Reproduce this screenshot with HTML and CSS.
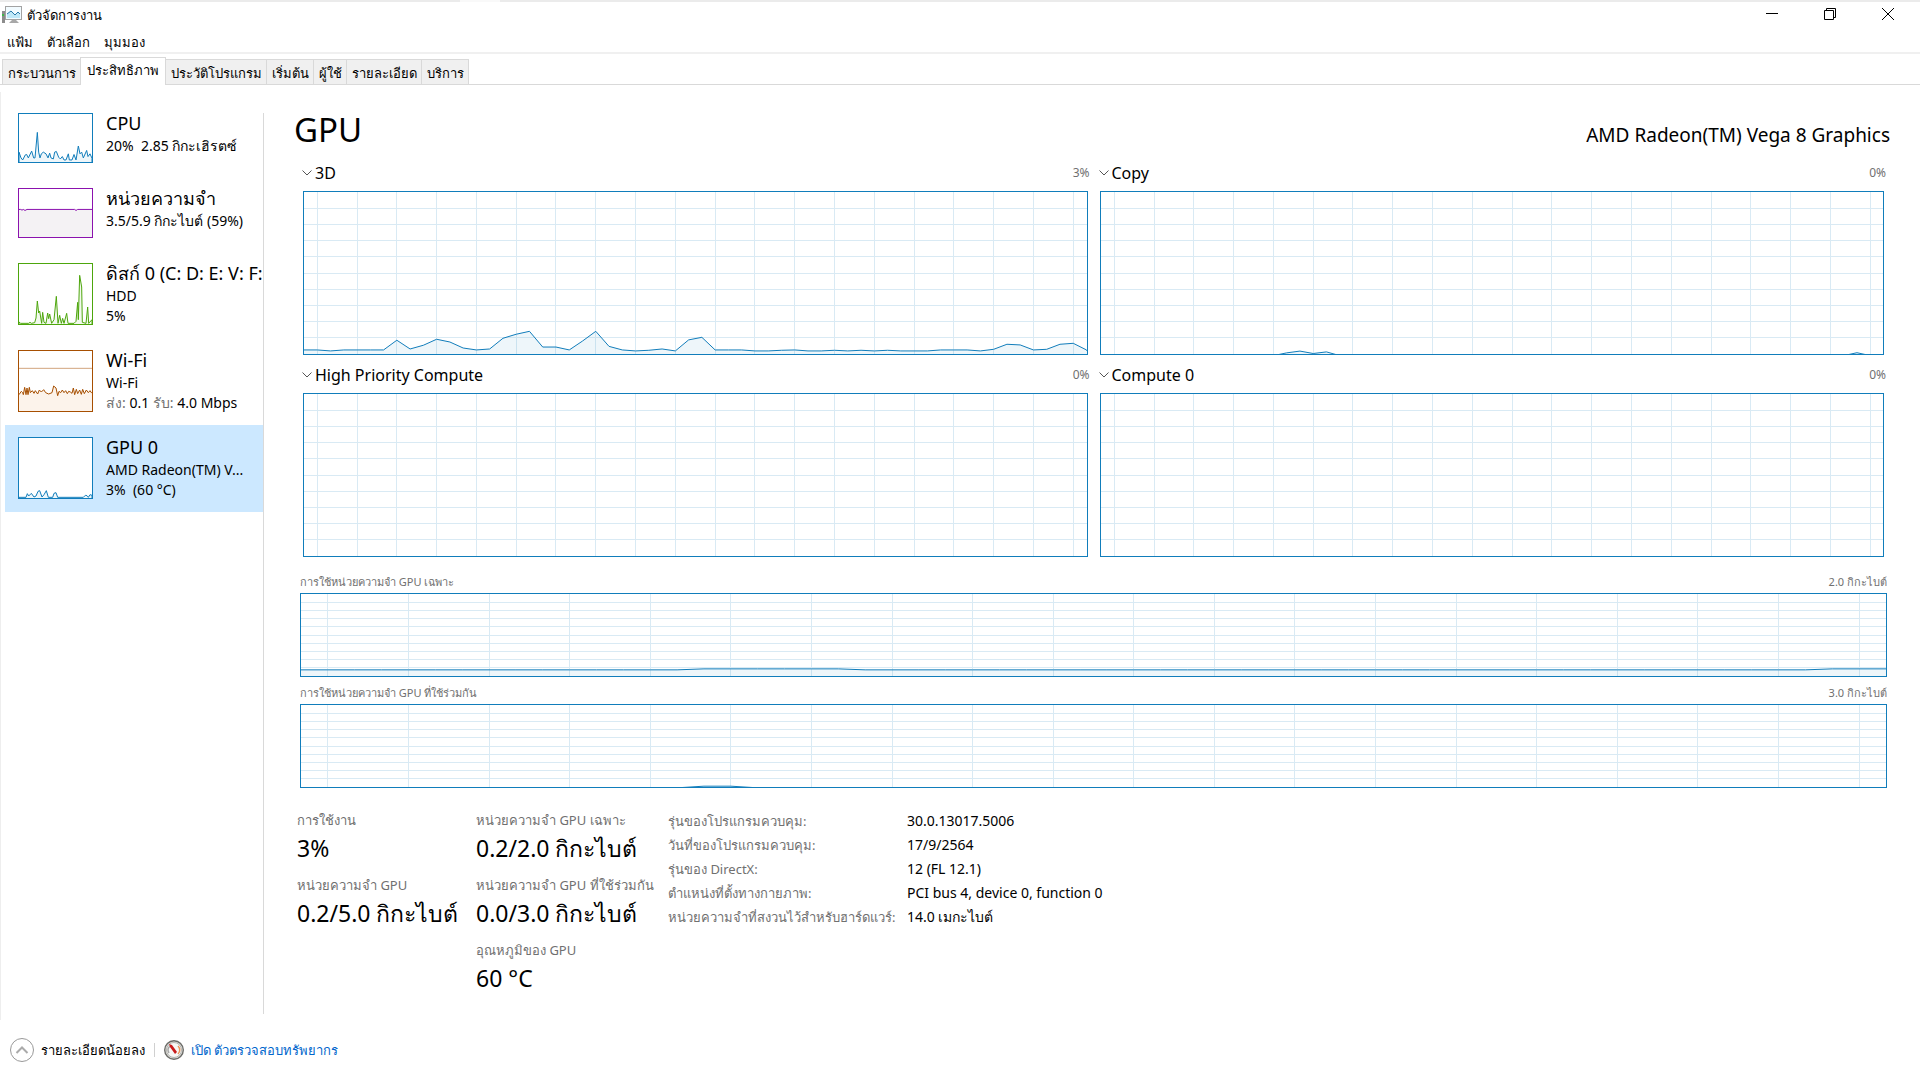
FILE: index.html
```
<!DOCTYPE html>
<html lang="th">
<head>
    <meta charset="UTF-8">
    <title>ตัวจัดการงาน</title>
    <link rel="stylesheet" href="styles.css">
</head>
<body>
<div class="window">
    <div class="top-strip"></div>
    <header class="title-bar">
        <svg class="app-icon" viewBox="0 0 21 18">
            <rect x="0" y="5" width="3" height="12" fill="#8c8c8c"/>
            <rect x="0" y="8" width="2" height="2" fill="#3fb54a"/>
            <path d="M7 17h10l-3-3h-4z" fill="#a8a8a8"/>
            <rect x="3.500" y=".5" width="16" height="13" fill="#f2fbff" stroke="#a3a3a3"/>
            <path d="M5 8l4-3 4 4 3-3 2 2v4H5z" fill="#bfe8f8"/>
            <path d="M5 8l4-3 4 4 3-3 2 2" fill="none" stroke="#2779a9"/>
        </svg>
        <span class="title-text">ตัวจัดการงาน</span>
        <div class="window-buttons">
            <button aria-label="ย่อ"><svg viewBox="0 0 12 12"><path d="M0 5.500h12"/></svg></button>
            <button aria-label="คืนค่า"><svg viewBox="0 0 12 12"><path d="M.5 2.500h9v9h-9zM2.500 2.500v-2h9v9h-2"/></svg></button>
            <button aria-label="ปิด"><svg viewBox="0 0 12 12"><path d="M0 0l12 12M12 0L0 12"/></svg></button>
        </div>
    </header>
    <nav class="menu">
        <button>แฟ้ม</button>
        <button>ตัวเลือก</button>
        <button>มุมมอง</button>
    </nav>
    <div class="tabs">
        <button>กระบวนการ</button>
        <button class="active">ประสิทธิภาพ</button>
        <button>ประวัติโปรแกรม</button>
        <button>เริ่มต้น</button>
        <button>ผู้ใช้</button>
        <button>รายละเอียด</button>
        <button>บริการ</button>
    </div>

    <main class="content">
        <aside class="sidebar">
            <button class="item cpu">
                <svg class="thumb" viewBox="57 43 219 141" preserveAspectRatio="none">
                    <path d="M57 155L63 172 68 178 76 163 80 162 85 172 95 152 101 172 105 172 112 97 116 155 120 172 124 160 130 155 138 160 144 172 149 158 153 172 160 175 164 155 169 153 176 170 181 175 187 168 192 178 198 178 205 160 208 178 216 178 222 162 228 178 235 137 240 160 245 155 250 172 260 150 264 168 270 160 276 173V190H57z"/>
                </svg>
                <span class="item-text">
                    <span class="item-title">CPU</span>
                    <span>20%&nbsp; 2.85 กิกะเฮิรตซ์</span>
                </span>
            </button>
            <button class="item memory">
                <svg class="thumb" viewBox="57 268 219 141" preserveAspectRatio="none">
                    <path d="M50 328H62L66 330 70 328 75 331 81 328H224L228 331 233 328H280V415H50z"/>
                </svg>
                <span class="item-text">
                    <span class="item-title">หน่วยความจำ</span>
                    <span>3.5/5.9 กิกะไบต์ (59%)</span>
                </span>
            </button>
            <button class="item disk">
                <svg class="thumb" viewBox="57 493 219 180" preserveAspectRatio="none">
                    <path d="M57 667L62 671H86L90 668 94 671 104 669 108 655 112 604 116 640 119 634 125 671 128 638 132 668 138 671 143 640 146 657 149 643 155 671 162 660 169 590 174 671 179 647 184 671 188 656 192 671 200 641 204 671H222L228 665 233 608 235 660 239 527 245 562 247 668 258 671 263 622 266 671 276 660V676H57z"/>
                </svg>
                <span class="item-text">
                    <span class="item-title">ดิสก์ 0 (C: D: E: V: F:</span>
                    <span>HDD</span>
                    <span>5%</span>
                </span>
            </button>
            <button class="item wifi">
                <svg class="thumb" viewBox="57 63 219 180" preserveAspectRatio="none">
                    <path class="faint" d="M57 115H276"/>
                    <path d="M50 194H57L64 184 68 188 70 194 74 172 78 194 81 174 84 194 88 172 91 188 97 182 102 190 106 182 113 192 118 180 124 186 131 179 137 188 146 192 156 188 161 168 168 174 173 197 177 184 182 188 187 180 192 188 197 182 202 191 206 184 211 186 216 190 220 174 224 194 229 178 233 191 239 180 244 193 248 178 253 191 259 180 265 188 270 182 274 188 280 186V250H50z"/>
                </svg>
                <span class="item-text">
                    <span class="item-title">Wi-Fi</span>
                    <span>Wi-Fi</span>
                    <span><span class="muted">ส่ง:</span> 0.1 <span class="muted">รับ:</span> 4.0 Mbps</span>
                </span>
            </button>
            <button class="item gpu selected">
                <svg class="thumb" viewBox="57 324 219 180" preserveAspectRatio="none">
                    <path d="M57 502H78L82 491 86 498 94 490 102 501 108 498 114 484 119 482 126 501 132 494 139 482 145 502H158L162 490 168 488 173 502H250L256 496 261 497 265 502 270 494 276 496V508H57z"/>
                </svg>
                <span class="item-text">
                    <span class="item-title">GPU 0</span>
                    <span>AMD Radeon(TM) V...</span>
                    <span>3%&nbsp; (60 °C)</span>
                </span>
            </button>
        </aside>

        <section class="details">
            <div class="heading">
                <h1>GPU</h1>
                <span class="model">AMD Radeon(TM) Vega 8 Graphics</span>
            </div>

            <div class="engines">
                <div class="engine">
                    <div class="engine-head">
                        <svg class="chevron" viewBox="0 0 10 6"><path d="M.5.5L5 5 9.500.5"/></svg>
                        <select aria-label="เอนจิน 1"><option>3D</option></select>
                        <span>3%</span>
                    </div>
                    <svg class="chart" data-values="2.5,2.5,1.9,2.5,2.5,2.5,2.5,8.5,3.1,5.4,9.1,7.4,3.7,2.5,3.1,9.7,12.2,14,4.3,4.3,2.5,8,14,4.7,2.5,1.9,2.3,3.1,1.9,8.7,10.3,2.5,2.5,2.5,1.9,1.9,2.3,2.5,1.9,1.9,2.3,1.9,2.3,1.9,2.3,1.9,1.9,1.9,2.5,2.5,2.5,1.9,2.9,6,5.6,2.5,2.9,6,6.600,2.5"></svg>
                </div>
                <div class="engine">
                    <div class="engine-head">
                        <svg class="chevron" viewBox="0 0 10 6"><path d="M.5.5L5 5 9.500.5"/></svg>
                        <select aria-label="เอนจิน 2"><option>Copy</option></select>
                        <span>0%</span>
                    </div>
                    <svg class="chart" data-values="0,0,0,0,0,0,0,0,0,0,0,0,0,0,.7,1.8,.3,1.3,0,0,0,0,0,0,0,0,0,0,0,0,0,0,0,0,0,0,0,0,0,0,0,0,0,0,0,0,0,0,0,0,0,0,0,0,0,0,0,.8,0,0"></svg>
                </div>
                <div class="engine">
                    <div class="engine-head">
                        <svg class="chevron" viewBox="0 0 10 6"><path d="M.5.5L5 5 9.500.5"/></svg>
                        <select aria-label="เอนจิน 3"><option>High Priority Compute</option></select>
                        <span>0%</span>
                    </div>
                    <svg class="chart"></svg>
                </div>
                <div class="engine">
                    <div class="engine-head">
                        <svg class="chevron" viewBox="0 0 10 6"><path d="M.5.5L5 5 9.500.5"/></svg>
                        <select aria-label="เอนจิน 4"><option>Compute 0</option></select>
                        <span>0%</span>
                    </div>
                    <svg class="chart"></svg>
                </div>
            </div>

            <div class="memory-usage">
                <div class="memory-head"><span>การใช้หน่วยความจำ GPU เฉพาะ</span><span>2.0 กิกะไบต์</span></div>
                <svg class="chart low" data-values="7.5,7.5,7.5,7.5,7.5,7.5,7.5,7.5,7.5,7.5,7.5,7.5,7.5,7.5,7.5,8.7,8.7,8.7,8.7,8.7,8.7,7.5,7.5,7.5,7.5,7.5,7.5,7.5,7.5,7.5,7.5,7.5,7.5,7.5,7.5,7.5,7.5,7.5,7.5,7.5,7.5,7.5,7.5,7.5,7.5,7.5,7.5,7.5,7.5,7.5,7.5,7.5,7.5,7.5,7.5,7.5,7.5,8.7,8.7,8.7"></svg>
                <div class="memory-head"><span>การใช้หน่วยความจำ GPU ที่ใช้ร่วมกัน</span><span>3.0 กิกะไบต์</span></div>
                <svg class="chart low" data-values="0,0,0,0,0,0,0,0,0,0,0,0,0,0,0,1,1,0,0,0,0,0,0,0,0,0,0,0,0,0,0,0,0,0,0,0,0,0,0,0,0,0,0,0,0,0,0,0,0,0,0,0,0,0,0,0,0,0,0,0"></svg>
            </div>

            <div class="stats">
                <dl class="stat-column">
                    <dt>การใช้งาน</dt><dd>3%</dd>
                    <dt>หน่วยความจำ GPU</dt><dd>0.2/5.0 กิกะไบต์</dd>
                </dl>
                <dl class="stat-column">
                    <dt>หน่วยความจำ GPU เฉพาะ</dt><dd>0.2/2.0 กิกะไบต์</dd>
                    <dt>หน่วยความจำ GPU ที่ใช้ร่วมกัน</dt><dd>0.0/3.0 กิกะไบต์</dd>
                    <dt>อุณหภูมิของ GPU</dt><dd>60 °C</dd>
                </dl>
                <table class="properties">
                    <tr><th>รุ่นของโปรแกรมควบคุม:</th><td>30.0.13017.5006</td></tr>
                    <tr><th>วันที่ของโปรแกรมควบคุม:</th><td>17/9/2564</td></tr>
                    <tr><th>รุ่นของ DirectX:</th><td>12 (FL 12.1)</td></tr>
                    <tr><th>ตำแหน่งที่ตั้งทางกายภาพ:</th><td>PCI bus 4, device 0, function 0</td></tr>
                    <tr><th>หน่วยความจำที่สงวนไว้สำหรับฮาร์ดแวร์:</th><td>14.0 เมกะไบต์</td></tr>
                </table>
            </div>
        </section>
    </main>

    <footer class="footer">
        <button class="fewer">
            <svg class="circle" viewBox="0 0 24 24"><circle cx="12" cy="12" r="11.500"/><path d="M6.500 15L12 9.500l5.500 5.500"/></svg>
            รายละเอียดน้อยลง
        </button>
        <a class="monitor" href="#">
            <svg class="gauge" viewBox="0 0 20 20">
                <circle cx="10" cy="10" r="9.300" fill="#e4e4e0" stroke="#6b6b68" stroke-width="1.400"/>
                <circle cx="10" cy="10" r="7.500" fill="#f7f7f5" stroke="#b5b5b0"/>
                <path d="M5 13a5.500 5.500 0 0 1 1-7" fill="none" stroke="#a8a8a8" stroke-width="1.500"/>
                <path d="M14 6a5.500 5.500 0 0 1 0 8" fill="none" stroke="#e8955a" stroke-width="1.500"/>
                <path d="M5 4l3 1 5 7-2 2-5-7z" fill="#c91a1a"/>
            </svg>
            <span>เปิด ตัวตรวจสอบทรัพยากร</span>
        </a>
    </footer>
</div>
<script src="charts.js"></script>
</body>
</html>
```
FILE: styles.css
```
* {
    box-sizing: border-box;
}
body {
    margin: 0;
    font-family: "Noto Sans", "Open Sans", sans-serif;
    font-size: 13px;
    line-height: 20px;
    color: #000;
    background-color: #fff;
}
button, select {
    font: inherit;
    color: inherit;
    background: none;
    border: none;
    margin: 0;
    padding: 0;
    white-space: nowrap;
}
.window {
    display: flex;
    flex-direction: column;
    min-height: 100vh;
}
.top-strip {
    height: 2px;
    background: linear-gradient(to right, #ebebeb 460px, #f9f9f9 460px, #f9f9f9 500px, #ebebeb 500px);
}
.title-bar {
    display: flex;
    height: 30px;
    padding: 4px 3px 0 2px;
}
.app-icon {
    width: 21px;
    height: 18px;
}
.title-text {
    margin-left: 4px;
    line-height: 18px;
}
.window-buttons {
    display: flex;
    margin-left: auto;
}
.window-buttons button {
    width: 58px;
    height: 16px;
}
.window-buttons svg {
    display: block;
    margin: 2px auto;
    width: 12px;
    height: 12px;
    fill: none;
    stroke: #000;
}
.menu {
    display: flex;
    gap: 14px;
    height: 22px;
    padding-left: 7px;
    border-bottom: 2px solid #f0f0f0;
}
.tabs {
    display: flex;
    align-items: flex-end;
    height: 31px;
    padding-left: 2px;
    border-bottom: 1px solid #d9d9d9;
}
.tabs button {
    height: 25px;
    padding: 2px 4px 0 5px;
    background-color: #f0f0f0;
    border: 1px solid #d9d9d9;
    border-bottom: none;
    margin-right: -1px;
}
.tabs .active {
    height: 28px;
    margin-bottom: -1px;
    padding: 0 6px 4px;
    background-color: #fff;
    position: relative;
}
.content {
    display: flex;
    flex: 1;
    border-left: 1px solid #eee;
    margin-top: 7px;
}
.sidebar {
    width: 263px;
    margin: 21px 0 6px;
    padding-left: 4px;
    border-right: 1px solid #d9d9d9;
}
.item {
    display: flex;
    width: 100%;
    padding: 12px 0 13px 13px;
    font-size: 14px;
    text-align: left;
}
.cpu {
    margin-top: -12px;
}
.selected {
    background-color: #cce8ff;
}
.thumb {
    flex: none;
    width: 75px;
    height: 62px;
    border: 1px solid currentColor;
    background-color: #fff;
}
.thumb path {
    fill: currentColor;
    fill-opacity: 0.07;
    stroke: currentColor;
    vector-effect: non-scaling-stroke;
}
.thumb .faint {
    opacity: 0.5;
}
.cpu .thumb, .memory .thumb {
    height: 50px;
}
.cpu .thumb, .gpu .thumb {
    color: #117dbb;
}
.memory .thumb {
    color: #8b12ae;
}
.memory .thumb path {
    fill: #f4f2f4;
    fill-opacity: 1;
}
.disk .thumb {
    color: #4da60c;
}
.wifi .thumb {
    color: #a74f01;
}
.wifi .thumb path {
    fill: #fcf3eb;
    fill-opacity: 1;
}
.item-text {
    display: flex;
    flex-direction: column;
    margin-left: 13px;
    height: 50px;
}
.item-title {
    margin-bottom: 3px;
    font-size: 18px;
    line-height: 20px;
}
.muted {
    color: #707070;
}
.details {
    flex: 1;
    min-width: 0;
    padding: 16px 30px 0 30px;
}
.heading {
    display: flex;
    justify-content: space-between;
    align-items: baseline;
    line-height: 44px;
}
h1 {
    margin: 0;
    font-size: 33px;
    font-weight: normal;
}
.model {
    font-size: 19px;
    line-height: 20px;
}
.engines {
    display: grid;
    grid-template-columns: 1fr 1fr;
    column-gap: 12px;
    padding: 1px 6px 0 9px;
}
.engine-head {
    display: flex;
    align-items: center;
    height: 38px;
    margin: 0 -2px 0 -1px;
    padding-top: 2px;
}
.engine-head select {
    appearance: none;
    margin-left: 3px;
    font-size: 16px;
    line-height: 24px;
}
.engine-head span {
    margin-left: auto;
    font-size: 12px;
    color: #707070;
}
.chevron {
    width: 10px;
    height: 6px;
    fill: none;
    stroke: #555;
}
.chart {
    display: block;
    width: 100%;
    height: 164px;
    border: 1px solid #117dbb;
}
.low {
    height: 84px;
}
.grid {
    stroke: #d9eaf4;
    vector-effect: non-scaling-stroke;
    shape-rendering: crispEdges;
}
.area {
    fill: #117dbb;
    fill-opacity: 0.07;
    stroke: #117dbb;
    vector-effect: non-scaling-stroke;
}
.memory-usage {
    padding: 9px 3px 0 6px;
}
.memory-head {
    display: flex;
    justify-content: space-between;
    height: 27px;
    padding-top: 6px;
    font-size: 11px;
    color: #707070;
}
.stats {
    display: flex;
    padding: 22px 0 0 3px;
}
.stat-column {
    margin: 0;
    min-width: 179px;
    white-space: nowrap;
}
.stat-column + .stat-column {
    min-width: 192px;
}
dt {
    color: #707070;
}
dd {
    margin: 0 0 9px;
    font-size: 23px;
    line-height: 36px;
}
.properties {
    border-collapse: collapse;
    align-self: flex-start;
    line-height: 24px;
    margin-top: -1px;
}
.properties th, .properties td {
    padding: 0;
    font-weight: normal;
    text-align: left;
}
.properties th {
    width: 239px;
    color: #707070;
}
.properties td {
    font-size: 14px;
}
.footer {
    display: flex;
    align-items: center;
    height: 60px;
    padding-left: 10px;
}
.fewer, .monitor {
    display: flex;
    align-items: center;
    gap: 7px;
}
.fewer {
    padding-right: 9px;
}
.circle {
    width: 24px;
    height: 24px;
    fill: none;
    stroke: #999;
}
.circle path {
    stroke-width: 2;
    stroke: #aaa;
}
.monitor {
    height: 14px;
    padding-left: 9px;
    border-left: 1px solid #d0d0d0;
    color: #0066cc;
    text-decoration: none;
}
.gauge {
    width: 20px;
    height: 20px;
}
```
FILE: charts.js
```
// 60 seconds of samples, newest on the right
const LAST = 59;

function addPath(chart, className, d) {
    const path = document.createElementNS("http://www.w3.org/2000/svg", "path");
    path.setAttribute("class", className);
    path.setAttribute("d", d);
    chart.appendChild(path);
}

document.querySelectorAll(".chart").forEach(function(chart) {
    chart.setAttribute("viewBox", "0 0 " + LAST + " 100");
    chart.setAttribute("preserveAspectRatio", "none");

    let grid = "";
    for (let x = 1; x < LAST; x += 3) {
        grid += "M" + x + " 0V100";
    }
    for (let y = 10; y < 100; y += 10) {
        grid += "M0 " + y + "H" + LAST;
    }
    addPath(chart, "grid", grid);

    if (chart.dataset.values) {
        // zero samples sit just under the frame so the bottom border stays thin
        const heights = chart.dataset.values.split(",").map(function(value) {
            return Number(value) === 0 ? 101 : 100 - value;
        });
        const points = heights.map(function(y, i) {
            return i + " " + y;
        });
        addPath(chart, "area", "M-1 110L-1 " + heights[0] + "L" + points.join("L") + "L60 110z");
    }
});
```
